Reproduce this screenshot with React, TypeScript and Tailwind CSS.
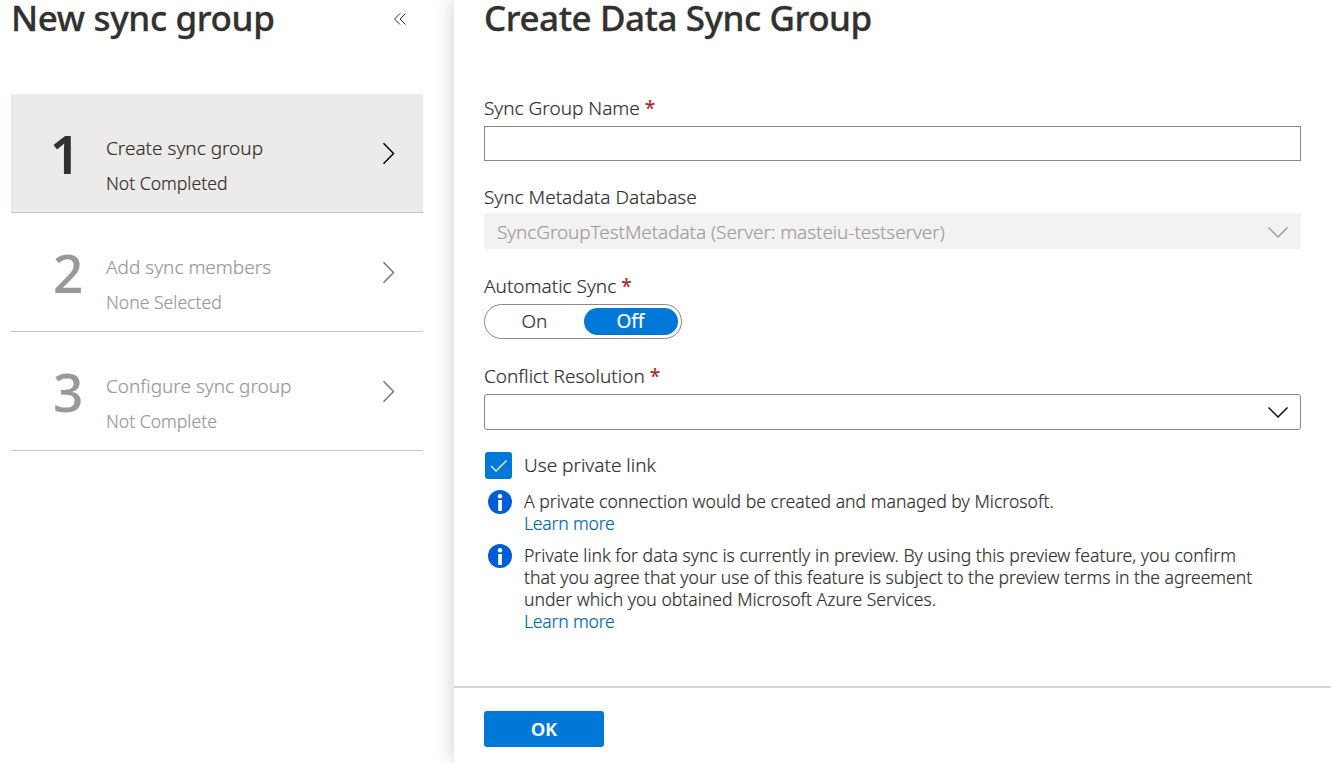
import React from "react";

type Step = { number: string; title: string; status: string; active?: boolean };

const steps: Step[] = [
  { number: "1", title: "Create sync group", status: "Not Completed", active: true },
  { number: "2", title: "Add sync members", status: "None Selected" },
  { number: "3", title: "Configure sync group", status: "Not Complete" },
];

function ChevronRight({ className }: { className: string }) {
  return (
    <svg viewBox="0 0 14 24" className={`h-6 w-3.5 ${className}`} fill="none" stroke="currentColor" strokeWidth="1.5">
      <path d="M1.500 2.300 11.500 12.500 1.500 22.700" />
    </svg>
  );
}

function ChevronDown({ className }: { className: string }) {
  return (
    <svg viewBox="0 0 22 12" className={`h-3 w-[22px] ${className}`} fill="none" stroke="currentColor" strokeWidth="1.5">
      <path d="M1.500 1.500 11 11 20.500 1.500" />
    </svg>
  );
}

function InfoIcon() {
  return (
    <svg viewBox="0 0 24 24" className="h-6 w-6 shrink-0">
      <circle cx="12" cy="12" r="12" fill="#015cda" />
      <circle cx="12" cy="6.2" r="2.2" fill="#fff" />
      <rect x="10.2" y="10" width="3.7" height="11" fill="#fff" />
    </svg>
  );
}

function Label({ children, required }: { children: React.ReactNode; required?: boolean }) {
  return (
    <div className="flex h-[26px] items-center whitespace-pre text-[19px] leading-[26px]">
      <span>{children}</span>
      {required && <span className="ml-[5px] text-[19px] font-normal text-[#a4262c]">*</span>}
    </div>
  );
}

export default function App() {
  return (
    <div className="flex h-[763px] w-[1331px] overflow-hidden bg-white font-['Noto_Sans',sans-serif] font-light text-[#323130] [-webkit-text-stroke:0.2px]">
      <aside className="flex w-[454px] shrink-0 flex-col pl-[11px] pr-[31px]">
        <header className="flex h-[94px] items-start justify-between pr-4">
          <h1 className="whitespace-nowrap text-[35px] font-medium leading-[36px] tracking-[-0.35px] [-webkit-text-stroke:0.3px]">
            New sync group
          </h1>
          <svg viewBox="0 0 14 14" className="mt-3 h-3.5 w-3.5" fill="none" stroke="#323130" strokeWidth="1">
            <path d="M7 1.500 1.500 7 7 12.500M12.500 1.500 7 7l5.500 5.500" />
          </svg>
        </header>
        {steps.map((step) => (
          <div
            key={step.number}
            className={`flex h-[119px] border-b border-[#c8c6c4] ${step.active ? "bg-[#ecebe9]" : "text-[#999]"}`}
          >
            <div
              className={`w-[95px] pt-[30px] text-[53px] leading-[60px] ${step.active ? "pl-[39px] font-semibold" : "pl-[42px] font-medium"}`}
            >
              {step.number}
            </div>
            <div className="flex-1 whitespace-nowrap pt-[41px]">
              <div className="text-[19px] leading-[26px]">{step.title}</div>
              <div className="mt-[10px] text-[17.600px] leading-[24px]">{step.status}</div>
            </div>
            <ChevronRight className={`mr-[27px] mt-[47px] ${step.active ? "text-black" : "text-[#777]"}`} />
          </div>
        ))}
      </aside>

      <main className="flex flex-1 flex-col bg-white shadow-[0_0_20px_rgba(0,0,0,0.2)]">
        <div className="flex h-[686px] flex-col pl-[30px] pr-[30px]">
          <h1 className="h-[95px] whitespace-nowrap text-[35px] font-medium leading-[36px] tracking-[-0.45px] [-webkit-text-stroke:0.3px]">
            Create Data Sync Group
          </h1>
          <Label required>Sync Group Name</Label>
          <div className="mt-[5px] h-[35px] border border-[#8a8886]" />
          <div className="mt-[23px]">
            <Label>Sync Metadata Database</Label>
          </div>
          <div className="mt-[3px] flex h-9 items-center justify-between rounded-[3px] bg-[#f3f2f1] pl-[13px] pr-3 pt-0.5 text-[#a19f9d]">
            <span className="text-[19px] tracking-[-0.09px]">SyncGroupTestMetadata (Server: masteiu-testserver)</span>
            <ChevronDown className="text-[#a19f9d]" />
          </div>
          <div className="mt-[24px]">
            <Label required>Automatic Sync</Label>
          </div>
          <div className="mt-[5px] flex h-[35px] w-[198px] rounded-full border border-[#8a8886] p-[3px] text-[19px] leading-[26px]">
            <span className="w-24 pr-[3px] text-center">On</span>
            <span className="w-[94px] rounded-full bg-[#0078d7] pr-[1px] text-center font-normal text-white">Off</span>
          </div>
          <div className="mt-[24px]">
            <Label required>Conflict Resolution</Label>
          </div>
          <div className="mt-[5px] flex h-9 items-center justify-end rounded-[3px] border border-[#8a8886] pr-[11px]">
            <ChevronDown className="text-[#111]" />
          </div>
          <div className="ml-[1px] mt-[22px] flex h-[27px] items-center">
            <span className="flex h-[27px] w-[27px] items-center justify-center rounded-[3px] bg-[#0078d7]">
              <svg viewBox="0 0 18 14" className="h-3.5 w-[18px]" fill="none" stroke="#fff" strokeWidth="1.3">
                <path d="M1 7 6 12 16.500 1.500" />
              </svg>
            </span>
            <span className="ml-3 text-[19px] leading-[25px]">Use private link</span>
          </div>
          <div className="ml-1 mt-[11px] flex text-[17.600px] leading-[22px]">
            <InfoIcon />
            <div className="ml-3 whitespace-nowrap tracking-[0.02px]">
              <div>A private connection would be created and managed by Microsoft.</div>
              <a className="tracking-[-0.2px] text-[#0067b8]">Learn more</a>
            </div>
          </div>
          <div className="ml-1 mt-[10px] flex text-[17.600px] leading-[22px]">
            <InfoIcon />
            <div className="ml-3 whitespace-nowrap">
              <div>Private link for data sync is currently in preview. By using this preview feature, you confirm</div>
              <div className="tracking-[-0.04px]">
                that you agree that your use of this feature is subject to the preview terms in the agreement
              </div>
              <div>under which you obtained Microsoft Azure Services.</div>
              <a className="tracking-[-0.2px] text-[#0067b8]">Learn more</a>
            </div>
          </div>
        </div>
        <footer className="flex-1 border-t-2 border-[#d6d6d6] pl-[30px] pt-[23px]">
          <button className="block h-9 w-[120px] rounded-[3px] bg-[#0078d7] text-[18px] font-semibold text-white">
            OK
          </button>
        </footer>
      </main>
    </div>
  );
}
